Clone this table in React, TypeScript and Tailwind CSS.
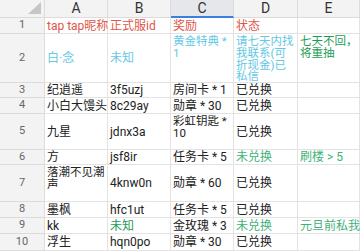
import clsx from "clsx"

type Cell = { text?: string; tone?: "red" | "cyan" | "green" | "lightGreen" | "dark"; wrap?: boolean }

const COLS = ["A", "B", "C", "D", "E"]
const ROW_H = ["h-[16px]", "h-[49px]", "h-[15px]", "h-[16px]", "h-[36px]", "h-[15px]", "h-[37px]", "h-[16px]", "h-[16px]", "h-[17px]"]
const COL_W = ["w-[63px]", "w-[63px]", "w-[63px]", "w-[64px]", "w-[62px]"]

const toneClass = {
  red: "text-[#e0564a]",
  cyan: "text-[#62c8e4]",
  green: "text-[#1d9c56]",
  lightGreen: "text-[#3fb27a]",
  dark: "text-[#222]",
}

const rows: Cell[][] = [
  [
    { text: "tap tap昵称", tone: "red" },
    { text: "正式服id", tone: "red" },
    { text: "奖励", tone: "red" },
    { text: "状态", tone: "red" },
    {},
  ],
  [
    { text: "白·念", tone: "cyan" },
    { text: "未知", tone: "cyan" },
    { text: "黄金特典 *\n1", tone: "cyan", wrap: true },
    { text: "请七天内找\n我联系(可\n折现金)已\n私信", tone: "cyan", wrap: true },
    { text: "七天不回，\n将重抽", tone: "green", wrap: true },
  ],
  [{ text: "纪逍遥" }, { text: "3f5uzj" }, { text: "房间卡 * 1" }, { text: "已兑换" }, {}],
  [{ text: "小白大馒头" }, { text: "8c29ay" }, { text: "勋章 * 30" }, { text: "已兑换" }, {}],
  [{ text: "九星" }, { text: "jdnx3a" }, { text: "彩虹钥匙 *\n10", wrap: true }, { text: "已兑换" }, {}],
  [
    { text: "方" },
    { text: "jsf8ir" },
    { text: "任务卡 * 5" },
    { text: "未兑换", tone: "lightGreen" },
    { text: "刷楼 > 5", tone: "lightGreen" },
  ],
  [{ text: "落潮不见潮\n声", wrap: true }, { text: "4knw0n" }, { text: "勋章 * 60" }, { text: "已兑换" }, {}],
  [{ text: "墨枫" }, { text: "hfc1ut" }, { text: "任务卡 * 5" }, { text: "已兑换" }, {}],
  [
    { text: "kk" },
    { text: "未知", tone: "green" },
    { text: "金玫瑰 * 3" },
    { text: "未兑换", tone: "lightGreen" },
    { text: "元旦前私我", tone: "lightGreen" },
  ],
  [{ text: "浮生" }, { text: "hqn0po" }, { text: "勋章 * 30" }, { text: "已兑换" }, {}],
]

export default function App() {
  return (
    <div className="w-[360px] h-[251px] overflow-hidden bg-white font-['Roboto','Noto_Sans_CJK_SC',sans-serif]">
      <div className="flex h-[18px]">
        <div className="relative w-[45px] shrink-0 bg-[#f3f3f3] border-r border-b border-[#dcdcdc]">
          <div className="absolute right-[3px] bottom-[3px] w-0 h-0 border-l-[13px] border-l-transparent border-b-[12px] border-b-[#c6c6c6]" />
        </div>
        {COLS.map((c, i) => (
          <div
            key={c}
            className={clsx(
              COL_W[i],
              "shrink-0 flex items-center justify-center text-[14px] text-[#333] border-r",
              c === "C" ? "bg-[#e5e7ea] border-b-2 border-b-[#3a7ee0] border-r-[#dcdcdc]" : "bg-[#f3f3f3] border-b border-[#dcdcdc]"
            )}
          >
            {c}
          </div>
        ))}
      </div>
      {rows.map((row, r) => (
        <div key={r} className={clsx("flex", ROW_H[r])}>
          <div className="w-[45px] shrink-0 bg-[#f3f3f3] border-r border-b border-[#dcdcdc] flex items-center justify-center text-[11px] text-[#666]">
            {r + 1}
          </div>
          {row.map((cell, i) => (
            <div
              key={i}
              className={clsx(
                COL_W[i],
                "shrink-0 border-r border-b border-[#e3e3e3] px-[2px] whitespace-pre",
                toneClass[cell.tone ?? "dark"],
                cell.wrap ? "pt-[2px] text-[11.5px] leading-[11.75px]" : "flex items-center text-[12px] leading-none overflow-visible"
              )}
            >
              {cell.text}
            </div>
          ))}
        </div>
      ))}
    </div>
  )
}
